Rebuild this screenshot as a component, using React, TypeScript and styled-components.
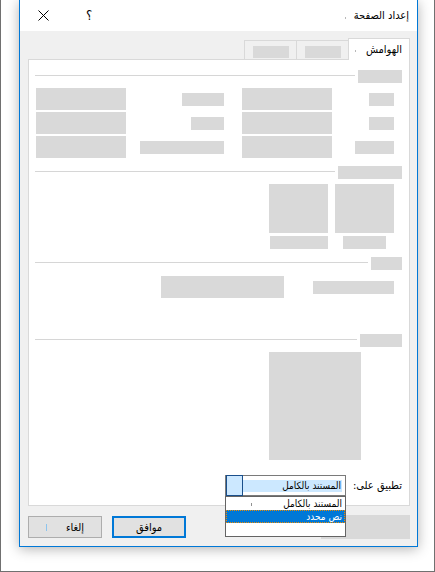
import React from 'react';
import styled, { createGlobalStyle } from 'styled-components';

const GlobalStyle = createGlobalStyle`
  html, body {
    margin: 0;
    padding: 0;
    background: #ffffff;
  }

  body {
    font-family: "Segoe UI", "DejaVu Sans Condensed", "DejaVu Sans", sans-serif;
    color: #000000;
  }

  * {
    box-sizing: border-box;
  }
`

const detailRows = [
  { label: 25, caption: 42 },
  { label: 25, caption: 33 },
  { label: 39, caption: 84 },
]

const tiles = [
  { caption: 43 },
  { caption: 58 },
]

export default function App(): JSX.Element {
  return (
    <>
      <GlobalStyle />
      <Screen>
        <Window>
          <TitleBar>
            <CaptionButton aria-label="close">
              <svg width="11" height="11" viewBox="0 0 11 11">
                <path d="M0.5 0.5L10.5 10.5M10.5 0.5L0.5 10.5" stroke="#000" strokeWidth="1" fill="none" />
              </svg>
            </CaptionButton>
            <CaptionButton aria-label="help">
              <HelpGlyph>؟</HelpGlyph>
            </CaptionButton>
            <Title>
              إعداد الصفحة
              <Speck />
            </Title>
          </TitleBar>

          <Body>
            <TabStrip>
              <ActiveTab>
                الهوامش
                <Speck />
              </ActiveTab>
              <Tab><Block $w={36} $h={12} /></Tab>
              <Tab><Block $w={36} $h={12} /></Tab>
            </TabStrip>

            <Panel>
              <SectionHeader>
                <Block $w={44} $h={13} />
                <Rule />
              </SectionHeader>
              <FieldGrid>
                {detailRows.map((row, i) => (
                  <React.Fragment key={i}>
                    <LabelA $w={row.label} $h={13} />
                    <FieldB $w={90} $h={22} />
                    <LabelC $w={row.caption} $h={13} />
                    <FieldD $w={90} $h={22} />
                  </React.Fragment>
                ))}
              </FieldGrid>

              <SectionHeader $top={8}>
                <Block $w={64} $h={13} />
                <Rule />
              </SectionHeader>
              <TileRow>
                {tiles.map((t, i) => (
                  <TileColumn key={i}>
                    <Block $w={59} $h={49} />
                    <TileCaption $w={t.caption} $h={13} />
                  </TileColumn>
                ))}
              </TileRow>

              <SectionHeader $top={8}>
                <Block $w={31} $h={13} />
                <Rule />
              </SectionHeader>
              <InlineRow>
                <Block $w={81} $h={13} />
                <Block $w={123} $h={22} />
              </InlineRow>

              <SectionHeader $top={36}>
                <Block $w={42} $h={13} />
                <Rule />
              </SectionHeader>
              <Preview $w={92} $h={108} />

              <ApplyRow>
                <ApplyLabel>تطبيق على:</ApplyLabel>
                <Combo>
                  <ComboValue>
                    <Selection>المستند بالكامل</Selection>
                  </ComboValue>
                  <ComboButton />
                  <DropList>
                    <Option>
                      المستند بالكامل
                      <ItemSpeck />
                    </Option>
                    <Option $selected>نص محدد</Option>
                  </DropList>
                </Combo>
              </ApplyRow>
            </Panel>

            <Footer>
              <Block $w={89} $h={24} />
              <PrimaryButton>موافق</PrimaryButton>
              <Button>
                <Caret />
                إلغاء
              </Button>
            </Footer>
          </Body>
        </Window>
      </Screen>
    </>
  )
}


const Screen = styled.div`
  width: 435px;
  height: 572px;
  padding-left: 18px;
  border: 1px solid #707070;
  border-top: none;
  background: #ffffff;
  overflow: hidden;
`

const Window = styled.div`
  display: flex;
  flex-direction: column;
  width: 399px;
  height: 547px;
  border: 1px solid #0078d7;
  border-top: none;
  background: #f0f0f0;
  box-shadow: 0 2px 12px rgba(0, 0, 0, 0.3);
`

const TitleBar = styled.div`
  display: flex;
  align-items: center;
  height: 31px;
  background: #ffffff;
`

const CaptionButton = styled.div`
  display: flex;
  align-items: center;
  justify-content: center;
  width: 46px;
  height: 31px;
`

const HelpGlyph = styled.span`
  font-size: 13px;
  line-height: 13px;
`

const Title = styled.div`
  display: flex;
  align-items: center;
  gap: 8px;
  margin-left: auto;
  padding-right: 8px;
  direction: rtl;
  font-size: 11px;
`

const Speck = styled.span`
  width: 1px;
  height: 2px;
  margin-top: 4px;
  background: #b8b8b8;
`

const Body = styled.div`
  display: flex;
  flex-direction: column;
  flex: 1;
  padding: 7px 7px 0 8px;
`

const TabStrip = styled.div`
  display: flex;
  align-items: flex-end;
  height: 21px;
  direction: rtl;
`

const ActiveTab = styled.div`
  position: relative;
  z-index: 1;
  display: flex;
  align-items: center;
  gap: 10px;
  width: 62px;
  height: 22px;
  margin-bottom: -1px;
  padding: 0 7px 1px 0;
  border: 1px solid #d9d9d9;
  border-bottom: none;
  background: #ffffff;
  font-size: 11px;
`

const Tab = styled.div`
  display: flex;
  justify-content: center;
  width: 52px;
  height: 19px;
  padding-top: 5px;
  border-top: 1px solid #d9d9d9;
  border-left: 1px solid #d9d9d9;
  background: #f0f0f0;
`

const Block = styled.div<{ $w: number; $h: number }>`
  flex: none;
  width: ${p => p.$w}px;
  height: ${p => p.$h}px;
  background: #d9d9d9;
`

const Panel = styled.div`
  position: relative;
  display: flex;
  flex-direction: column;
  width: 382px;
  height: 447px;
  padding: 10px 7px 0 6px;
  border: 1px solid #d9d9d9;
  background: #ffffff;
  direction: rtl;
`

const SectionHeader = styled.div<{ $top?: number }>`
  display: flex;
  align-items: flex-start;
  gap: 3px;
  margin-top: ${p => p.$top ?? 0}px;
`

const Rule = styled.div`
  flex: 1;
  height: 1px;
  margin-top: 5px;
  background: #d6d6d6;
`

const FieldGrid = styled.div`
  display: grid;
  grid-template-columns: 62px 90px 18px 98px 90px;
  grid-template-rows: repeat(3, 22px);
  row-gap: 2px;
  align-items: center;
  justify-items: start;
  margin: 5px 8px 0 0;
`

const LabelA = styled(Block)`
  grid-column: 1;
`

const FieldB = styled(Block)`
  grid-column: 2;
`

const LabelC = styled(Block)`
  grid-column: 4;
`

const FieldD = styled(Block)`
  grid-column: 5;
`

const TileRow = styled.div`
  display: flex;
  gap: 7px;
  margin: 5px 8px 0 0;
`

const TileColumn = styled.div`
  display: flex;
  flex-direction: column;
  align-items: center;
`

const TileCaption = styled(Block)`
  margin-top: 3px;
`

const InlineRow = styled.div`
  display: flex;
  align-items: center;
  gap: 29px;
  margin: 6px 8px 0 0;
`

const Preview = styled(Block)`
  margin: 5px 41px 0 0;
`

const ApplyRow = styled.div`
  display: flex;
  align-items: center;
  margin-top: 15px;
`

const ApplyLabel = styled.span`
  flex: none;
  width: 55px;
  font-size: 11px;
  line-height: 14px;
  white-space: nowrap;
`

const Combo = styled.div`
  position: relative;
  display: flex;
  width: 121px;
  height: 21px;
  margin-right: 1px;
  border: 1px solid #7a7a7a;
  background: #ffffff;
`

const ComboValue = styled.div`
  flex: 1;
  padding: 4px 3px 2px 0;
`

const Selection = styled.div`
  height: 12px;
  padding-right: 1px;
  background: #cce8ff;
  font-size: 10px;
  line-height: 12px;
  white-space: nowrap;
  overflow: hidden;
`

const ComboButton = styled.div`
  width: 17px;
  margin: -1px 0;
  border: 1px solid #1a4f8b;
  background: #cce8ff;
`

const DropList = styled.div`
  position: absolute;
  z-index: 10;
  top: calc(100% + 1px);
  left: -1px;
  width: 121px;
  height: 41px;
  border: 1px solid #646464;
  background: #ffffff;
`

const Option = styled.div<{ $selected?: boolean }>`
  position: relative;
  height: 13px;
  padding-right: 3px;
  font-size: 10px;
  line-height: 13px;
  white-space: nowrap;
  color: ${p => (p.$selected ? '#ffffff' : '#000000')};
  background: ${p => (p.$selected ? '#0078d7' : 'transparent')};
  outline: ${p => (p.$selected ? '1px dotted #f08c00' : 'none')};
  outline-offset: -1px;
`

const ItemSpeck = styled.span`
  position: absolute;
  left: 25px;
  top: 6px;
  width: 1px;
  height: 3px;
  background: #909090;
`

const Footer = styled.div`
  display: flex;
  align-items: flex-start;
  padding-top: 10px;
  direction: rtl;

  & > ${Block} {
    margin-top: -1px;
  }
`

const Button = styled.div`
  display: flex;
  align-items: center;
  justify-content: center;
  gap: 19px;
  width: 74px;
  height: 22px;
  margin-right: 10px;
  border: 1px solid #adadad;
  background: #e1e1e1;
  font-size: 11px;
  direction: ltr;
`

const PrimaryButton = styled(Button)`
  margin-right: auto;
  border: 2px solid #0078d7;
`

const Caret = styled.span`
  width: 1px;
  height: 7px;
  background: #8cc4ee;
`
